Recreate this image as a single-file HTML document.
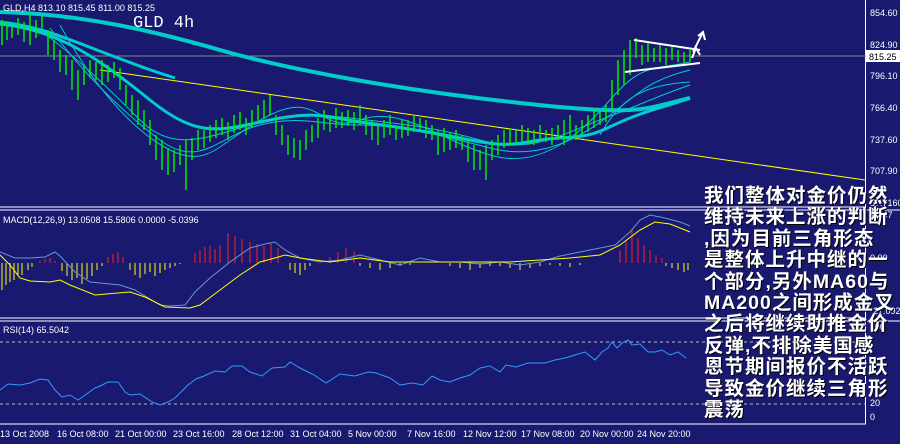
<!DOCTYPE html>
<html><head><meta charset="utf-8"><style>
html,body{margin:0;padding:0;background:#191970;}
body{width:900px;height:444px;overflow:hidden;position:relative;font-family:"Liberation Sans",sans-serif;}
svg{position:absolute;left:0;top:0;}
.t{font-family:"Liberation Sans",sans-serif;font-size:9px;fill:#fff;}
.ov{position:absolute;left:704px;top:186px;width:200px;color:#fff;font-family:"Liberation Sans","Noto Sans CJK SC",sans-serif;font-size:19.5px;font-weight:bold;line-height:21.4px;letter-spacing:1px;text-shadow:1px 1px 0 #000;}
</style></head><body>
<svg width="900" height="444" viewBox="0 0 900 444">
<rect width="900" height="444" fill="#191970"/>
<line x1="865.5" y1="0" x2="865.5" y2="424" stroke="#fff"/>
<line x1="0" y1="207" x2="866" y2="207" stroke="#fff"/>
<line x1="0" y1="210" x2="900" y2="210" stroke="#fff"/>
<line x1="0" y1="318" x2="866" y2="318" stroke="#fff"/>
<line x1="0" y1="321" x2="900" y2="321" stroke="#fff"/>
<line x1="0" y1="424" x2="866" y2="424" stroke="#fff"/>
<line x1="0" y1="56" x2="866" y2="56" stroke="#888" />
<line x1="100" y1="70" x2="865" y2="180" stroke="#ffff00"/>
<g fill="none" stroke="#00cccc">
<path d="M0 12 C80 14 150 30 220 50 S400 90 520 103 S640 110 690 98" stroke-width="4"/>
<path d="M0 22 C40 26 70 40 110 55 S150 70 175 78" stroke-width="3"/>
<path d="M0 24 C60 30 100 60 150 100 S220 130 270 120 S330 118 360 122 S420 130 470 140 S520 140 560 138 S600 130 630 118 S670 106 690 98" stroke-width="3"/>
<path d="M40 30 C80 60 110 90 140 120 S200 140 240 128 S300 112 350 118 S430 126 480 140 S560 135 600 120 S660 95 690 85" stroke-width="1"/>
<path d="M50 28 C80 70 120 110 160 140 S220 135 260 125 S320 125 360 125 S440 135 490 148 S580 138 610 115 S650 80 690 70" stroke-width="1"/>
<path d="M60 25 C90 80 130 130 170 150 S220 140 270 115 S320 135 360 120 S440 140 490 155 S580 135 610 100 S650 70 690 62" stroke-width="1"/>
<path d="M600 135 C620 100 640 85 690 82" stroke-width="1"/>
</g>
<path fill="none" stroke="#00ee00" stroke-width="1.5" d="M2 20V45M7 22V40M12 25V38M18 18V35M24 22V42M30 14V45M36 20V38M42 15V30M48 30V55M54 40V60M60 50V72M66 55V75M72 60V90M78 70V100M84 65V85M90 60V78M96 62V80M102 60V85M108 65V82M114 62V78M120 68V90M126 85V105M132 95V115M138 100V125M144 110V130M150 120V145M156 135V160M162 140V170M168 148V175M174 150V172M180 145V165M186 140V190M192 138V160M198 130V150M204 130V148M210 125V142M216 120V138M222 118V135M228 122V140M234 115V133M240 112V130M246 118V135M252 110V128M258 105V122M264 100V118M270 95V115M276 115V135M282 125V145M288 135V155M294 138V158M300 140V160M306 130V150M312 125V142M318 118V138M324 110V130M330 115V132M336 108V128M342 112V128M348 110V126M354 112V130M360 105V125M366 115V135M372 120V140M378 125V145M384 120V138M390 115V135M396 125V140M402 120V138M408 120V136M414 115V132M420 118V130M426 120V138M432 125V140M438 130V155M444 128V152M450 132V150M456 130V148M462 135V150M468 140V162M474 145V170M480 150V170M486 145V180M492 140V160M498 135V155M504 130V148M510 128V145M516 130V145M522 125V142M528 128V145M534 130V145M540 125V140M546 130V142M552 128V145M558 125V140M564 120V145M570 115V140M576 125V140M582 120V135M588 115V132M594 110V128M600 112V125M606 105V122M612 80V110M618 60V95M624 50V85M630 40V75M636 38V58M642 45V65M648 42V62M654 48V62M660 45V62M666 48V65M672 45V60M678 50V62M684 52V65M690 50V62"/>
<g stroke="#fff" stroke-width="2" fill="none">
<line x1="634" y1="40" x2="700" y2="50"/>
<line x1="625" y1="72" x2="700" y2="63"/>
<path d="M692 58 L696 48 L700 55 M693 52 L703 32 M698 36 L703 32 L705 40"/>
</g>
<path fill="none" stroke="#ffff00" stroke-width="1" d="M2 263V290M6 263V285M10 263V282M14 263V280M18 263V276M22 263V275M28 263V270M32 263V267M62 263V271M67 263V276M72 263V280M77 263V278M82 263V284M87 263V279M92 263V276M97 263V270M102 263V266M130 263V270M135 263V275M140 263V278M145 263V274M150 263V272M155 263V276M160 263V273M165 263V270M170 263V268M175 263V266M180 263V264M290 263V270M295 263V273M300 263V275M305 263V270M310 263V266M360 263V266M370 263V268M380 263V270M390 263V268M400 263V266M410 263V265M450 263V266M460 263V268M470 263V270M480 263V268M490 263V266M500 263V266M510 263V268M520 263V270M530 263V268M540 263V266M550 263V265M560 263V266M570 263V267M580 263V265M666 263V266M672 263V268M678 263V270M684 263V272M688 263V270"/>
<path fill="none" stroke="#ff2020" stroke-width="1" d="M40 263V261M45 263V259M50 263V258M55 263V261M108 263V257M113 263V254M118 263V252M123 263V257M195 263V253M200 263V250M205 263V247M210 263V246M215 263V249M220 263V245M228 263V233M235 263V236M242 263V239M250 263V242M257 263V244M264 263V246M271 263V243M278 263V248M330 263V257M338 263V252M346 263V248M354 263V251M620 263V250M626 263V240M632 263V230M638 263V238M644 263V245M650 263V250M656 263V255M662 263V258"/>
<polyline fill="none" stroke="#6699cc" points="0,252 15,258 30,258 45,257 55,252 60,256 75,272 90,282 100,283 120,285 135,290 160,305 170,306 185,305 195,292 210,278 230,262 250,248 265,244 275,242 285,250 300,258 320,262 340,260 360,255 380,260 400,265 420,258 440,262 460,262 480,264 500,262 520,265 540,262 560,256 580,252 600,248 615,245 630,232 640,220 650,215 665,218 680,222 690,226"/>
<polyline fill="none" stroke="#ffff00" points="0,255 10,265 20,278 30,281 50,282 60,280 70,285 95,295 130,292 145,297 165,307 190,308 200,305 220,290 240,275 260,262 275,258 285,255 300,258 330,262 360,258 390,262 420,262 450,262 480,262 510,262 540,260 570,258 600,255 620,245 640,230 655,222 670,224 690,232"/>
<line x1="0" y1="342" x2="866" y2="342" stroke="#bbb" stroke-dasharray="3,3"/>
<line x1="0" y1="404" x2="866" y2="404" stroke="#bbb" stroke-dasharray="3,3"/>
<polyline fill="none" stroke="#3399ff" points="0,390 8,384 20,385 30,383 40,379 48,380 55,390 62,397 70,395 78,400 88,393 95,388 100,386 108,382 118,382 125,392 130,395 140,394 152,402 160,405 168,402 175,398 188,385 196,379 204,376 215,371 225,372 232,366 242,366 250,372 262,376 272,368 285,367 290,362 300,368 314,375 326,383 340,374 355,376 368,372 376,373 390,378 400,385 412,383 423,385 432,376 440,380 450,382 460,378 470,375 480,368 490,366 500,372 506,365 516,367 528,363 545,363 555,360 565,358 575,355 585,352 595,360 602,352 608,348 612,342 617,348 622,343 628,340 632,345 640,344 648,352 655,352 662,350 670,355 678,352 686,358"/>
<g class="t">
<text x="870" y="16">854.60</text>
<text x="870" y="48">824.90</text>
<text x="870" y="79">796.10</text>
<text x="870" y="111">766.40</text>
<text x="870" y="143">737.60</text>
<text x="870" y="174">707.90</text>
<text x="870" y="206">57.7160</text>
<text x="870" y="218">18.47</text>
<text x="870" y="261">0.00</text>
<text x="870" y="314">-27.0928</text>
<text x="870" y="330">100</text>
<text x="870" y="406">20</text>
<text x="870" y="420">0</text>
</g>
<rect x="866" y="50" width="34" height="12" fill="#fff"/>
<text x="869" y="60" font-family="Liberation Sans" font-size="9" fill="#000">815.25</text>
<g class="t">
<text x="3" y="11">GLD,H4  813.10 815.45 811.00 815.25</text>
<text x="3" y="223">MACD(12,26,9) 13.0508 15.5806 0.0000 -5.0396</text>
<text x="3" y="333">RSI(14) 65.5042</text>
<text x="0" y="437">13 Oct 2008</text>
<text x="57" y="437">16 Oct 08:00</text>
<text x="115" y="437">21 Oct 00:00</text>
<text x="173" y="437">23 Oct 16:00</text>
<text x="232" y="437">28 Oct 12:00</text>
<text x="290" y="437">31 Oct 04:00</text>
<text x="348" y="437">5 Nov 00:00</text>
<text x="407" y="437">7 Nov 16:00</text>
<text x="463" y="437">12 Nov 12:00</text>
<text x="521" y="437">17 Nov 08:00</text>
<text x="580" y="437">20 Nov 00:00</text>
<text x="637" y="437">24 Nov 20:00</text>
</g>
<text x="133" y="27" font-family="Liberation Mono,monospace" font-size="17" fill="#fff">GLD 4h</text>
</svg>
<div class="ov">我们整体对金价仍然<br>维持未来上涨的判断<br>,因为目前三角形态<br>是整体上升中继的一<br>个部分,另外MA60与<br>MA200之间形成金叉<br>之后将继续助推金价<br>反弹,不排除美国感<br>恩节期间报价不活跃<br>导致金价继续三角形<br>震荡</div>
</body></html>
